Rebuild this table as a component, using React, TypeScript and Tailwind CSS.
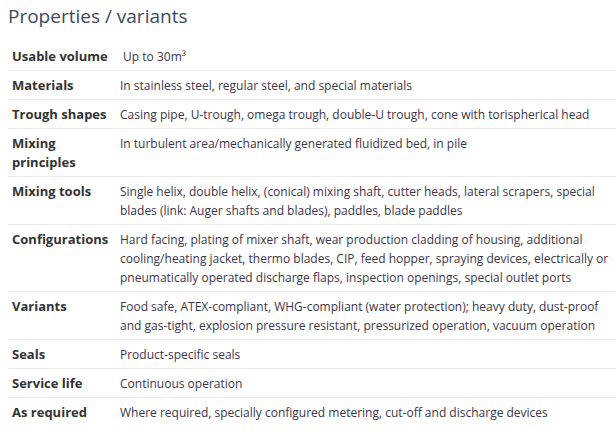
const rows: { label: string; value: string }[] = [
  { label: 'Usable volume', value: '\u00a0Up to 30m³' },
  { label: 'Materials', value: 'In stainless steel, regular steel, and special materials' },
  { label: 'Trough shapes', value: 'Casing pipe, U-trough, omega trough, double-U trough, cone with torispherical head' },
  { label: 'Mixing principles', value: 'In turbulent area/mechanically generated fluidized bed, in pile' },
  {
    label: 'Mixing tools',
    value:
      'Single helix, double helix, (conical) mixing shaft, cutter heads, lateral scrapers, special blades (link: Auger shafts and blades), paddles, blade paddles',
  },
  {
    label: 'Configurations',
    value:
      'Hard facing, plating of mixer shaft, wear production cladding of housing, additional cooling/heating jacket, thermo blades, CIP, feed hopper, spraying devices, electrically or pneumatically operated discharge flaps, inspection openings, special outlet ports',
  },
  {
    label: 'Variants',
    value:
      'Food safe, ATEX-compliant, WHG-compliant (water protection); heavy duty, dust-proof and gas-tight, explosion pressure resistant, pressurized operation, vacuum operation',
  },
  { label: 'Seals', value: 'Product-specific seals' },
  { label: 'Service life', value: 'Continuous operation' },
  { label: 'As required', value: 'Where required, specially configured metering, cut-off and discharge devices' },
]

export default function App() {
  return (
    <div className="min-h-[448px] bg-white pl-2 pt-1 font-['Open_Sans',sans-serif]">
      <h2 className="text-[19px] leading-[24px] text-[#3d4a5a]">Properties / variants</h2>
      <div className="mt-[14px]">
        {rows.map((row, i) => (
          <div
            key={row.label}
            className={
              i < rows.length - 1
                ? 'flex border-b border-[#ececec] pt-[5px] pb-[4px] leading-[19px]'
                : 'flex pt-[5px] pb-[4px] leading-[19px]'
            }
          >
            <div className="w-[112px] shrink-0 pl-1 pr-1 text-[13px] font-bold text-[#333333]">{row.label}</div>
            <div className="flex-1 pr-1 text-[12px] text-[#3b354c]">{row.value}</div>
          </div>
        ))}
      </div>
    </div>
  )
}
